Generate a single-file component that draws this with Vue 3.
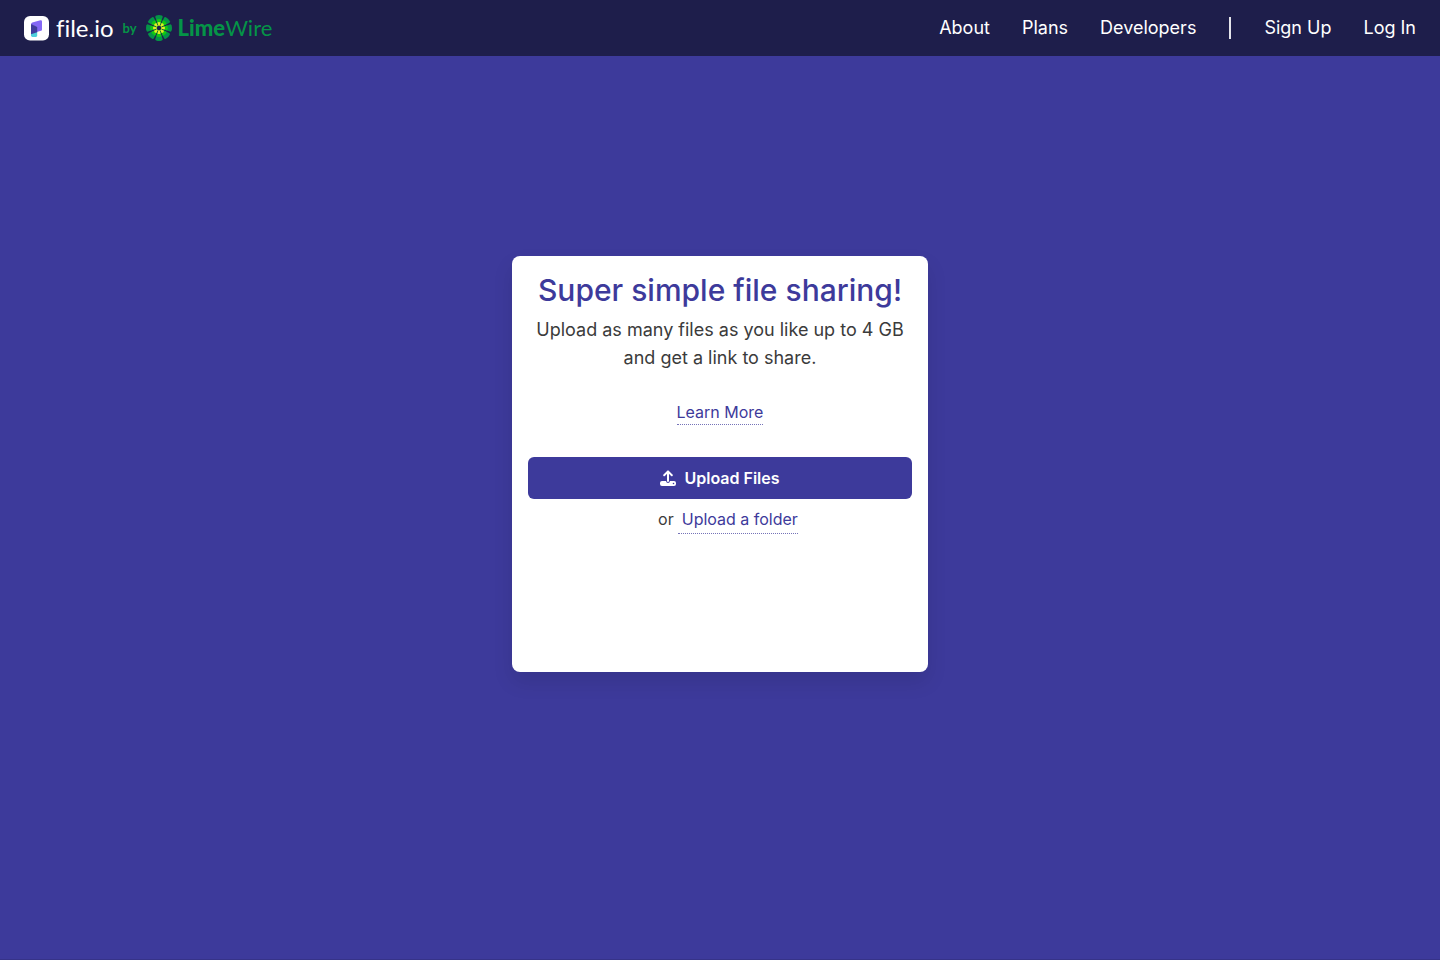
<script setup>
const mainLinks = ['About', 'Plans', 'Developers']
const accountLinks = ['Sign Up', 'Log In']
const wedges = [0, 45, 90, 135, 180, 225, 270, 315]
</script>

<template>
  <div class="page">
    <header class="bar">
      <a class="brand" href="#" aria-label="file.io by LimeWire">
        <svg class="mark" viewBox="0 0 25 25" aria-hidden="true">
          <rect width="25" height="24.5" rx="6" fill="#fff" />
          <path d="M7 17.6 13.2 15.6V19.6Q13.2 20.7 12 20.9L8.4 21Q7 21 7 19.6Z" fill="#4fd0dc" />
          <path d="M7 8.4Q7 7 8.3 6.6L16.4 4.3Q18 4 18 5.4V13.4Q18 14.5 17 14.8L12.6 16V11Z" fill="#8468f5" />
          <path d="M7 8 12.4 10.4Q13.2 10.8 13.2 11.6V16.2L7 18.2Z" fill="#403c9c" />
        </svg>
        <span class="name">file.io</span>
        <span class="by">by</span>
        <svg class="lime" viewBox="-13 -13 26 26" aria-hidden="true">
          <g v-for="angle in wedges" :key="angle" :transform="`rotate(${angle})`">
            <path d="M-.6-2-3.6-10.8Q-4-12-2.8-12.5 0-13.5 2.8-12.5 4-12 3.6-10.8L.6-2Z" fill="#059447" />
            <path d="M-.6-2-2.6-8.2Q0-9.8 2.6-8.2L.6-2Z" fill="#12c812" />
            <path d="M-.5-2-1.6-5.4Q0-6.8 1.6-5.4L.5-2Z" fill="#e5ec24" />
          </g>
          <circle r="2.2" fill="#1e1e4b" />
        </svg>
        <span class="wire"><b>Lime</b>Wire</span>
      </a>
      <nav class="nav" aria-label="Main">
        <a v-for="label in mainLinks" :key="label" href="#">{{ label }}</a>
        <span class="divider" aria-hidden="true"></span>
        <a v-for="label in accountLinks" :key="label" href="#">{{ label }}</a>
      </nav>
    </header>

    <main class="hero">
      <section class="card">
        <h1>Super simple file sharing!</h1>
        <p class="lead">Upload as many files as you like up to 4 GB and get a link to share.</p>
        <a class="more" href="#">Learn More</a>
        <button class="upload" type="button">
          <svg viewBox="0 0 16 16" aria-hidden="true">
            <path d="M8 11V1.8M4.2 5.2 8 1.4 11.8 5.2" fill="none" stroke="#fff" stroke-width="2" stroke-linecap="round" stroke-linejoin="round" />
            <path fill-rule="evenodd" d="M2 11H6Q6.3 13 8 13T10 11H14Q16 11 16 13V14Q16 16 14 16H2Q0 16 0 14V13Q0 11 2 11ZM13.5 12.7A.8.8 0 1 0 13.5 14.3 .8.8 0 1 0 13.5 12.7Z" fill="#fff" />
          </svg>
          Upload Files
        </button>
        <div class="alt">
          <span>or</span>
          <button class="folder" type="button">Upload a folder</button>
        </div>
      </section>
    </main>
  </div>
</template>

<style>
body {
  margin: 0;
  background: #3d3a9b;
}
</style>

<style scoped>
.page {
  box-sizing: border-box;
  min-height: 100vh;
  background: #3d3a9b;
  border-bottom: 1px solid #363388;
  color: #3b3b3b;
  font-family: Inter, "Liberation Sans", sans-serif;
  font-size: 16px;
  line-height: 24px;
}
a {
  text-decoration: none;
}
.bar {
  display: flex;
  align-items: center;
  justify-content: space-between;
  height: 56px;
  padding: 0 24px;
  background: #1e1e4b;
}
.brand {
  display: flex;
  align-items: center;
  color: #fff;
  font-family: Lato, sans-serif;
}
.mark {
  width: 25px;
  height: 25px;
  margin-right: 7px;
}
.name {
  font-size: 24px;
  font-variant-ligatures: none;
}
.by {
  margin: 0 9px 0 9px;
  color: #059447;
  font-size: 13px;
  font-weight: 700;
}
.lime {
  width: 26px;
  height: 26px;
  margin-right: 6px;
}
.wire {
  color: #059447;
  font-size: 22px;
}
.wire b {
  font-weight: 900;
}
.nav {
  display: flex;
  align-items: center;
  gap: 32px;
}
.nav a {
  color: #fff;
  font-size: 18px;
}
.divider {
  width: 2px;
  height: 22px;
  margin: 0 1px;
  background: #e4e4ea;
}
.hero {
  display: flex;
  justify-content: center;
  padding: 200px 16px 64px;
}
.card {
  display: flex;
  flex-direction: column;
  align-items: center;
  box-sizing: border-box;
  width: 100%;
  max-width: 416px;
  min-height: 416px;
  padding: 16px;
  border-radius: 8px;
  background: #fff;
  box-shadow: 0 10px 20px rgba(0, 0, 0, 0.1);
  text-align: center;
}
h1 {
  margin: 0;
  color: #3d3a9b;
  font-size: 30px;
  font-weight: 500;
  line-height: 36px;
}
.lead {
  margin: 8px 0 28px;
  font-size: 18px;
  line-height: 28px;
}
.more {
  border-bottom: 1px dotted #7573b8;
  color: #3d3a9b;
}
.upload {
  display: flex;
  align-items: center;
  justify-content: center;
  gap: 8px;
  width: 100%;
  height: 42px;
  margin-top: 32px;
  border: 0;
  border-radius: 6px;
  background: #3d3a9b;
  color: #fff;
  font: inherit;
  font-weight: 600;
}
.upload svg {
  width: 16px;
  height: 16px;
}
.alt {
  display: flex;
  gap: 4px;
  margin-top: 8px;
  padding-left: 16px;
}
.folder {
  padding: 0 0 2px 4px;
  border: 0;
  border-bottom: 1px dotted #7573b8;
  background: none;
  color: #3d3a9b;
  font: inherit;
}
</style>
